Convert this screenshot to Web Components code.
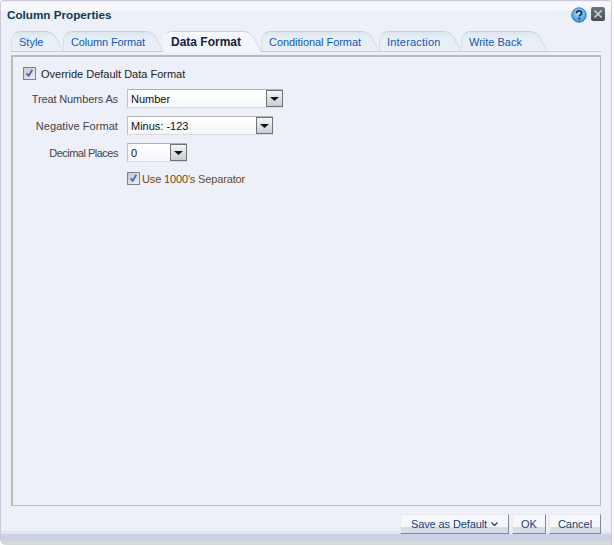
<!DOCTYPE html>
<html>
<head>
<meta charset="utf-8">
<title>Column Properties</title>
<style>
  html, body { margin: 0; padding: 0; background: #fff; }
  body { font: 11px "Liberation Sans", Arial, sans-serif; color: #222; }
</style>
</head>
<body>

<column-dialog heading="Column Properties">
  <tab-strip slot="tabs">
    <tab-item width="33">Style</tab-item>
    <tab-item width="81" style="letter-spacing: -.15px">Column Format</tab-item>
    <tab-item width="79" active>Data Format</tab-item>
    <tab-item width="99" style="letter-spacing: -.05px">Conditional Format</tab-item>
    <tab-item width="63" style="letter-spacing: .2px">Interaction</tab-item>
    <tab-item width="67">Write Back</tab-item>
  </tab-strip>

  <check-field checked style="margin-left: 10px">Override Default Data Format</check-field>
  <form-row label="Treat Numbers As" style="margin-top: 9px; letter-spacing: -.12px"><select-box width="156">Number</select-box></form-row>
  <form-row label="Negative Format" style="margin-top: 8px; letter-spacing: .06px"><select-box width="146">Minus: -123</select-box></form-row>
  <form-row label="Decimal Places" style="margin-top: 8px; letter-spacing: -.5px"><select-box width="60">0</select-box></form-row>
  <form-row style="margin-top: 10px"><check-field checked tint style="letter-spacing: -.15px">Use 1000's Separator</check-field></form-row>

  <dialog-button slot="footer" width="109" menu style="letter-spacing: -.1px">Save as Default</dialog-button>
  <dialog-button slot="footer" width="34">OK</dialog-button>
  <dialog-button slot="footer" width="52">Cancel</dialog-button>
</column-dialog>

<script>
// Dialog frame: title bar, tabs, content panel, footer
class ColumnDialog extends HTMLElement {
  constructor() {
    super();
    this.attachShadow({ mode: 'open' });
  }
  connectedCallback() {
    this.shadowRoot.innerHTML = `
      <style>
        :host {
          display: flex;
          flex-direction: column;
          box-sizing: border-box;
          width: 612px;
          height: 545px;
          padding-top: 1px;
          border-top: 1px solid #c9c9dc;
          border-left: 1px solid #c9c9dc;
          border-right: 1px solid #c9c9dc;
          border-radius: 4px 4px 0 6px;
          background: linear-gradient(#eef0f9 0, #eef0f9 530px, #dfe8ea 530px, #dfe8ea 533px, #ccd2e4 533px, #ccd2e4 540px, #d5dad8 540px);
        }
        .title {
          display: flex;
          align-items: center;
          justify-content: space-between;
          height: 27px;
          padding: 0 6px 0 6px;
          background: linear-gradient(#f6f8fd 0, #f6f8fd 9px, #e9f1f6 9px, #eef0f9 26px);
          flex: none;
        }
        h1 {
          margin: 0 0 3px;
          font-size: 11.7px;
          font-weight: 700;
          color: #0f3a56;
        }
        .tools { display: flex; gap: 4px; align-items: flex-start; margin-bottom: 1px; }
        svg { display: block; }
        .tabs { flex: none; padding: 0 10px 0 10px; margin-top: 2px; }
        .panel {
          flex: 1;
          min-height: 0;
          box-sizing: border-box;
          margin: 3px 10px 0 10px;
          padding: 10px 0 0 0;
          border-style: solid;
          border-width: 2px 1px 1px 2px;
          border-color: #bcbcb6;
        }
        .footer {
          flex: none;
          display: flex;
          justify-content: flex-end;
          gap: 3px;
          height: 39px;
          padding: 8px 10px 0 0;
          box-sizing: border-box;
        }
      </style>
      <div class="title">
        <h1>${this.getAttribute('heading')}</h1>
        <div class="tools">
          <svg width="16" height="16" viewBox="0 0 16 16">
            <defs><radialGradient id="h" cx="50%" cy="35%" r="70%"><stop offset="0" stop-color="#bfe6fa"/><stop offset="1" stop-color="#2a86d0"/></radialGradient></defs>
            <circle cx="8" cy="8" r="7.2" fill="url(#h)" stroke="#2a78b8"/>
            <path d="M5.6 6.2c0-1.5 1-2.3 2.5-2.3s2.5.8 2.5 2.1c0 1-.6 1.5-1.3 2-.6.4-.9.7-.9 1.4" fill="none" stroke="#10305c" stroke-width="1.7"/>
            <rect x="7.4" y="10.6" width="1.8" height="1.8" fill="#10305c"/>
          </svg>
          <svg width="14" height="14" viewBox="0 0 14 14">
            <defs><linearGradient id="c" x1="0" y1="0" x2="0" y2="1"><stop offset="0" stop-color="#6c7580"/><stop offset="1" stop-color="#474e58"/></linearGradient></defs>
            <rect width="14" height="14" rx="2" fill="url(#c)"/>
            <path d="M3.5 3.5l7 7M10.5 3.5l-7 7" stroke="#cfd3d8" stroke-width="1.6"/>
          </svg>
        </div>
      </div>
      <div class="tabs"><slot name="tabs"></slot></div>
      <div class="panel"><slot></slot></div>
      <div class="footer"><slot name="footer"></slot></div>
    `;
  }
}

class TabStrip extends HTMLElement {
  constructor() {
    super();
    this.attachShadow({ mode: 'open' }).innerHTML = `
      <style>
        :host {
          display: flex;
          height: 21px;
          box-sizing: border-box;
          border-bottom: 1px solid #c9cdd4;
        }
      </style>
      <slot></slot>
    `;
  }
}

// One tab: label box plus the curved right "ear"
class TabItem extends HTMLElement {
  constructor() {
    super();
    this.attachShadow({ mode: 'open' });
  }
  connectedCallback() {
    const active = this.hasAttribute('active');
    const top = active ? '#f8fafd' : '#dde6ee';
    const low = active ? '#f3f5fc' : '#e8eff6';
    const line = active ? '#cdd2e0' : '#c3d0da';
    const h = active ? 21 : 20;
    const id = 'g' + Math.random().toString(36).slice(2);
    this.shadowRoot.innerHTML = `
      <style>
        :host {
          display: flex;
          height: ${h}px;
          color: ${active ? '#14233a' : '#1357b5'};
          font-weight: ${active ? 700 : 400};
          font-size: ${active ? 12 : 11}px;
          z-index: ${active ? 1 : 0};
        }
        .label {
          position: relative;
          z-index: 1;
          box-sizing: border-box;
          width: ${this.getAttribute('width')}px;
          padding: 2px 0 0 7px;
          border-top: 1px solid ${line};
          border-left: 1px solid ${active ? 'transparent' : '#d5e0e8'};
          border-top-left-radius: 9px;
          background: linear-gradient(${top} 0, ${low} 7px, ${low} 100%);
          line-height: 17px;
          white-space: nowrap;
        }
        svg { display: block; flex: none; }
      </style>
      <div class="label"><slot></slot></div>
      <svg width="19" height="${h}" viewBox="0 0 19 ${h}">
        <defs>
          <linearGradient id="${id}" x1="0" y1="0" x2="0" y2="7" gradientUnits="userSpaceOnUse"><stop offset="0" stop-color="${top}"/><stop offset="1" stop-color="${low}"/></linearGradient>
          <linearGradient id="${id}s" x1="0" y1="0" x2="0" y2="${h}" gradientUnits="userSpaceOnUse"><stop offset="0" stop-color="${line}"/><stop offset="1" stop-color="${active ? '#dde1ea' : '#dbe4ec'}"/></linearGradient>
        </defs>
        <path d="M0 .5C6 .5 9 2 12 7L19 ${h}H0Z" fill="url(#${id})"/>
        <path d="M0 .5C6 .5 9 2 12 7L19 ${h}" fill="none" stroke="url(#${id}s)"/>
      </svg>
    `;
  }
}

class FormRow extends HTMLElement {
  constructor() {
    super();
    this.attachShadow({ mode: 'open' });
  }
  connectedCallback() {
    this.shadowRoot.innerHTML = `
      <style>
        :host {
          display: grid;
          grid-template-columns: 105px auto;
          column-gap: 9px;
          align-items: center;
          justify-content: start;
          color: #444;
        }
        .lbl { text-align: right; white-space: nowrap; }
      </style>
      <div class="lbl">${this.getAttribute('label') || ''}</div>
      <div><slot></slot></div>
    `;
  }
}

class SelectBox extends HTMLElement {
  constructor() {
    super();
    this.attachShadow({ mode: 'open' });
  }
  connectedCallback() {
    this.shadowRoot.innerHTML = `
      <style>
        :host {
          display: flex;
          box-sizing: border-box;
          width: ${this.getAttribute('width')}px;
          height: 19px;
          border: 1px solid #d8dade;
          border-top-color: #aeb0b3;
          border-left-color: #c0c2c6;
          background: linear-gradient(#fff, #f6f7fc);
          color: #111;
          letter-spacing: 0;
        }
        .val { flex: 1; padding-left: 3px; line-height: 19px; white-space: nowrap; }
        .btn {
          width: 17px;
          margin: 0 -1px 0 0;
          box-sizing: border-box;
          border: 1px solid #6f7378;
          background: linear-gradient(#f4f5f7, #c9cdd2);
          display: flex;
          align-items: center;
          justify-content: center;
        }
        .btn svg { display: block; }
      </style>
      <div class="val"><slot></slot></div>
      <div class="btn"><svg width="9" height="4" viewBox="0 0 9 4"><path d="M0 0H9L4.5 4Z" fill="#111"/></svg></div>
    `;
  }
}

class CheckField extends HTMLElement {
  constructor() {
    super();
    this.attachShadow({ mode: 'open' });
  }
  connectedCallback() {
    const tint = this.hasAttribute('tint');
    this.shadowRoot.innerHTML = `
      <style>
        :host {
          display: flex;
          align-items: flex-start;
          height: 13px;
          gap: ${tint ? 2 : 5}px;
          color: ${tint ? '#6b4a1a' : '#222'};
          white-space: nowrap;
        }
        svg { display: block; flex: none; }
        span { line-height: 13px; margin-top: 1px; }
      </style>
      <svg width="13" height="13" viewBox="0 0 13 13">
        <defs><linearGradient id="k" x1="0" y1="0" x2="1" y2="1"><stop offset="0" stop-color="#c3c6cc"/><stop offset="1" stop-color="#f0f1f4"/></linearGradient></defs>
        <rect x=".5" y=".5" width="12" height="12" fill="url(#k)" stroke="#7f8388"/>
        <path d="M3.5 6.3l2.2 2.5 3.6-6" fill="none" stroke="#5263b8" stroke-width="1.8"/>
      </svg>
      <span><slot></slot></span>
    `;
  }
}

class DialogButton extends HTMLElement {
  constructor() {
    super();
    this.attachShadow({ mode: 'open' });
  }
  connectedCallback() {
    const menu = this.hasAttribute('menu');
    this.shadowRoot.innerHTML = `
      <style>
        :host {
          display: flex;
          align-items: center;
          justify-content: center;
          gap: 4px;
          box-sizing: border-box;
          width: ${this.getAttribute('width')}px;
          height: 20px;
          border: 1px solid #e9edf3;
          border-right-color: #7d8a9c;
          border-bottom-color: #7d8a9c;
          background: linear-gradient(#f5f7fb 0, #f5f7fb 12px, #d6dbea 12px, #d6dbea 100%);
          color: #0f3f7a;
          white-space: nowrap;
        }
        svg { display: block; }
      </style>
      <slot></slot>
      ${menu ? '<svg width="7" height="4" viewBox="0 0 7 4"><path d="M.5.5l3 3 3-3" fill="none" stroke="#0f3f7a" stroke-width="1.2"/></svg>' : ''}
    `;
  }
}

customElements.define('column-dialog', ColumnDialog);
customElements.define('tab-strip', TabStrip);
customElements.define('tab-item', TabItem);
customElements.define('form-row', FormRow);
customElements.define('select-box', SelectBox);
customElements.define('check-field', CheckField);
customElements.define('dialog-button', DialogButton);
</script>
</body>
</html>
